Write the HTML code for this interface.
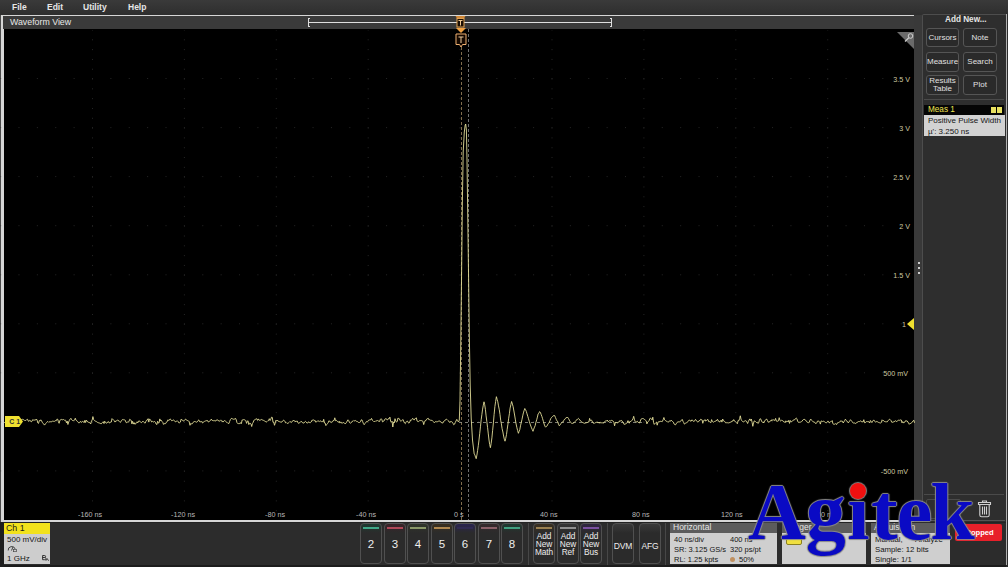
<!DOCTYPE html>
<html><head><meta charset="utf-8">
<style>
*{margin:0;padding:0;box-sizing:border-box}
html,body{width:1008px;height:567px;overflow:hidden;background:#2c2c2c;font-family:"Liberation Sans",sans-serif}
.a{position:absolute}
#menu{left:0;top:0;width:1008px;height:15px;background:linear-gradient(#3a3a3a,#2e2e2e)}
.mi{position:absolute;top:2px;font-size:8.5px;font-weight:bold;color:#e6e6e6;line-height:11px}
#wvframe{left:0;top:15px;width:916px;height:507px;background:#d6d6d6;border-left:1px solid #4a4a4a}
#hdr{left:3px;top:16px;width:912px;height:13px;background:#3a3a3a}
#hdrt{left:10px;top:17px;font-size:8.8px;color:#e8e8e8;line-height:11px}
#black{left:4px;top:29px;width:910px;height:491px;background:#000}
#gap{left:914px;top:15px;width:8px;height:507px;background:#393939}
#rpanel{left:922px;top:14px;width:85px;height:508px;background:#2e2e2e;border:1px solid #4d4d4d;border-bottom:none;border-radius:2px 2px 0 0}
#bottom{left:0;top:522px;width:1008px;height:45px;background:#2c2c2c}
.btn{position:absolute;border:1px solid #555;border-radius:3px;background:#2a2a2a;color:#e0e0e0;font-size:8px;text-align:center}
.lbl{position:absolute;font-size:7.2px;color:#cdc8a0;line-height:9px;white-space:nowrap}
.xl{position:absolute;font-size:7.2px;color:#b8b8b8;line-height:9px;white-space:nowrap;top:510px}
.cb{position:absolute;top:523px;width:22px;height:41px;border:1px solid #505050;border-radius:4px;background:linear-gradient(to bottom,var(--g,#3a3a3a) 0px,#2b2b2b 9px,#2b2b2b);color:#eee;text-align:center}
.cb i{position:absolute;left:2px;right:2px;top:3px;height:2px;background:var(--c)}
.cb span{position:absolute;left:0;right:0;top:14px;font-size:11.5px;line-height:13px}
.cb2 span{font-size:8.3px;line-height:8px;top:8px;letter-spacing:-0.1px}
.sep{position:absolute;top:522px;width:1px;height:43px;background:#474747}
.pnl{position:absolute;top:522px;height:42px;background:#cfcfcf}
.ph{position:absolute;left:0;top:0;right:0;height:11px;background:#5c5c5c;color:#e6e6e6;font-size:8.5px;line-height:11px;padding-left:3px}
.pt{position:absolute;font-size:7.5px;color:#151515;line-height:10px;white-space:nowrap}
</style></head><body>
<div id="menu" class="a"></div>
<div class="mi" style="left:12px">File</div>
<div class="mi" style="left:47px">Edit</div>
<div class="mi" style="left:83px">Utility</div>
<div class="mi" style="left:128px">Help</div>
<div id="wvframe" class="a"></div>
<div id="hdr" class="a"></div>
<div id="hdrt" class="a">Waveform View</div>
<!-- overview bar -->
<div class="a" style="left:309px;top:22px;width:303px;height:1px;background:#dedede"></div>
<div class="a" style="left:308px;top:18px;width:2px;height:9px;border:1px solid #dedede;border-right:none"></div>
<div class="a" style="left:610px;top:18px;width:2px;height:9px;border:1px solid #dedede;border-left:none"></div>
<div id="black" class="a"></div>
<div id="gap" class="a"></div>
<div id="rpanel" class="a"></div>
<div id="bottom" class="a"></div>
<!-- right panel -->
<div class="a" style="left:945px;top:15px;font-size:8.2px;font-weight:bold;color:#e6e6e6;line-height:10px">Add New...</div>
<div class="btn" style="left:926px;top:28px;width:33px;height:19px;line-height:17px">Cursors</div>
<div class="btn" style="left:963px;top:28px;width:34px;height:19px;line-height:17px">Note</div>
<div class="btn" style="left:926px;top:52px;width:33px;height:20px;line-height:18px">Measure</div>
<div class="btn" style="left:963px;top:52px;width:34px;height:20px;line-height:18px">Search</div>
<div class="btn" style="left:926px;top:75px;width:33px;height:20px;line-height:8px;padding-top:1px">Results<br>Table</div>
<div class="btn" style="left:963px;top:75px;width:34px;height:20px;line-height:18px">Plot</div>
<div class="a" style="left:924px;top:99px;width:80px;height:1px;background:#4a4a4a"></div>
<div class="a" style="left:924px;top:105px;width:80px;height:10px;background:#050505"></div>
<div class="a" style="left:928px;top:105px;font-size:8.2px;color:#f0e450;line-height:10px">Meas 1</div>
<div class="a" style="left:991px;top:107px;width:5px;height:6px;background:#e8e060"></div><div class="a" style="left:996.5px;top:107px;width:5px;height:6px;background:#e8e060"></div>
<div class="a" style="left:924px;top:115px;width:81px;height:21px;background:#d2d2d2"></div>
<div class="a" style="left:928px;top:116px;font-size:8px;color:#151515;line-height:10px;white-space:nowrap">Positive Pulse Width</div>
<div class="a" style="left:928px;top:127px;font-size:8px;color:#151515;line-height:10px;white-space:nowrap">&#181;': 3.250 ns</div>
<div class="a" style="left:918px;top:262px;width:2px;height:2px;background:#ccc"></div>
<div class="a" style="left:918px;top:267px;width:2px;height:2px;background:#ccc"></div>
<div class="a" style="left:918px;top:272px;width:2px;height:2px;background:#ccc"></div>
<div class="a" style="left:924px;top:494px;width:80px;height:1px;background:#4a4a4a"></div>
<div class="a" style="left:926px;top:499px;width:35px;height:20px;border:1px solid #4a4a4a;border-radius:2px"></div>
<!-- trash -->
<svg class="a" style="left:976px;top:499px" width="17" height="20" viewBox="0 0 17 20"><g fill="none" stroke="#d0d0d0" stroke-width="1.1"><path d="M2.5 3.5h12v2h-12z"/><path d="M6.5 3.5V2h4v1.5"/><path d="M3.8 5.5v10.5q0 1.8 1.8 1.8h5.8q1.8 0 1.8-1.8V5.5"/><path d="M6.5 7.5v8M8.5 7.5v8M10.5 7.5v8"/></g></svg>
<div class="a" style="left:955px;top:524px;width:47px;height:17px;background:#e8202a;border-radius:2px;color:#fff;font-size:7.6px;font-weight:bold;line-height:17px;text-align:center">Stopped</div>
<div class="a" style="left:1006px;top:14px;width:1px;height:551px;background:#b0b0b0"></div>
<div class="a" style="left:922px;top:520px;width:83px;height:1px;background:#555"></div>
<!-- bottom bar -->
<div class="a" style="left:4px;top:523px;width:46px;height:11px;background:#f2e21c"></div>
<div class="a" style="left:6px;top:523px;font-size:8.8px;color:#1a1a1a;line-height:11px">Ch 1</div>
<div class="a" style="left:4px;top:534px;width:46px;height:30px;background:#cdcdcd"></div>
<div class="pt" style="left:7px;top:535px;font-size:8px">500 mV/div</div>
<svg class="a" style="left:7px;top:544px" width="10" height="8" viewBox="0 0 10 8"><path d="M1.2 6.5 A3.6 3.6 0 0 1 8.2 5" fill="none" stroke="#333" stroke-width="0.9"/><path d="M4.5 6.5 L6 3" stroke="#333" stroke-width="0.9"/><rect x="6.5" y="5.5" width="3" height="2.2" fill="none" stroke="#444" stroke-width="0.7"/></svg>
<div class="pt" style="left:7px;top:554px;font-size:8px">1 GHz</div>
<svg class="a" style="left:42px;top:555px" width="7" height="6" viewBox="0 0 7 6"><path d="M0.6 0.5v4.2M0.6 0.5h1.8q1.2 0 1.2 1q0 1-1.2 1h-1.8M2.6 2.5q1.4 0 1.4 1.1q0 1.1-1.4 1.1h-2" fill="none" stroke="#222" stroke-width="0.9"/><path d="M3.8 5.8 L5.2 3.6 L6.6 5.8" fill="none" stroke="#222" stroke-width="0.8"/></svg>

<div class="cb" style="left:360px;--c:#40a888;--g:#1e3a30"><i></i><span>2</span></div>
<div class="cb" style="left:384px;--c:#b04858;--g:#3a2228"><i></i><span>3</span></div>
<div class="cb" style="left:407px;--c:#8a9868;--g:#30352a"><i></i><span>4</span></div>
<div class="cb" style="left:431px;--c:#b08850;--g:#3a3020"><i></i><span>5</span></div>
<div class="cb" style="left:454px;--c:#3a3070;--g:#2a2450"><i style="opacity:.4"></i><span>6</span></div>
<div class="cb" style="left:478px;--c:#8a6068;--g:#352a2c"><i></i><span>7</span></div>
<div class="cb" style="left:501px;--c:#40a080;--g:#1e3a30"><i></i><span>8</span></div>
<div class="sep" style="left:528px"></div>
<div class="cb cb2" style="left:533px;--c:#9a8050;--g:#3a3020"><i></i><span>Add<br>New<br>Math</span></div>
<div class="cb cb2" style="left:557px;--c:#909090;--g:#353535"><i></i><span>Add<br>New<br>Ref</span></div>
<div class="cb cb2" style="left:580px;--c:#7a50a0;--g:#302540"><i></i><span>Add<br>New<br>Bus</span></div>
<div class="sep" style="left:607px"></div>
<div class="cb cb2" style="left:612px"><span style="top:18px;font-size:8.5px;line-height:9px">DVM</span></div>
<div class="cb cb2" style="left:639px"><span style="top:18px;font-size:8.5px;line-height:9px">AFG</span></div>
<div class="sep" style="left:665px"></div>

<div class="pnl" style="left:670px;width:107px"><div class="ph">Horizontal</div></div>
<div class="pt" style="left:674px;top:535px">40 ns/div</div>
<div class="pt" style="left:730px;top:535px">400 ns</div>
<div class="pt" style="left:674px;top:545px">SR: 3.125 GS/s</div>
<div class="pt" style="left:730px;top:545px">320 ps/pt</div>
<div class="pt" style="left:674px;top:555px">RL: 1.25 kpts</div>
<div class="a" style="left:730px;top:557px;width:5px;height:5px;border-radius:50%;background:#c09060"></div>
<div class="pt" style="left:739px;top:555px">50%</div>

<div class="pnl" style="left:782px;width:84px"><div class="ph">Trigger</div></div>
<div class="a" style="left:786px;top:538px;width:16px;height:7px;background:#f0e040;border:1px solid #8a8020;border-radius:2px"></div>

<div class="pnl" style="left:871px;width:79px"><div class="ph">Acquisition</div></div>
<div class="pt" style="left:875px;top:535px;font-size:7.8px">Manual,</div>
<div class="pt" style="left:915px;top:535px;font-size:7.8px">Analyze</div>
<div class="pt" style="left:875px;top:545px;font-size:7.8px">Sample: 12 bits</div>
<div class="pt" style="left:875px;top:555px;font-size:7.8px">Single: 1/1</div>
<div class="a" style="left:0;top:522px;width:1006px;height:1px;background:#232323"></div>
<div class="a" style="left:0;top:565px;width:1006px;height:2px;background:#1c1c1c"></div>
<div class="a" style="left:0;top:522px;width:4px;height:45px;background:#1e1e1e"></div>
<svg class="a" style="left:0;top:0" width="1008" height="567" viewBox="0 0 1008 567">
<line x1="92.5" y1="30" x2="92.5" y2="520" stroke="#262626" stroke-width="1" stroke-dasharray="1 8.81" stroke-dashoffset="0.5"/>
<line x1="184.4" y1="30" x2="184.4" y2="520" stroke="#262626" stroke-width="1" stroke-dasharray="1 8.81" stroke-dashoffset="0.5"/>
<line x1="276.3" y1="30" x2="276.3" y2="520" stroke="#262626" stroke-width="1" stroke-dasharray="1 8.81" stroke-dashoffset="0.5"/>
<line x1="368.2" y1="30" x2="368.2" y2="520" stroke="#262626" stroke-width="1" stroke-dasharray="1 8.81" stroke-dashoffset="0.5"/>
<line x1="460.1" y1="30" x2="460.1" y2="520" stroke="#262626" stroke-width="1" stroke-dasharray="1 8.81" stroke-dashoffset="0.5"/>
<line x1="552.0" y1="30" x2="552.0" y2="520" stroke="#262626" stroke-width="1" stroke-dasharray="1 8.81" stroke-dashoffset="0.5"/>
<line x1="643.9" y1="30" x2="643.9" y2="520" stroke="#262626" stroke-width="1" stroke-dasharray="1 8.81" stroke-dashoffset="0.5"/>
<line x1="735.8" y1="30" x2="735.8" y2="520" stroke="#262626" stroke-width="1" stroke-dasharray="1 8.81" stroke-dashoffset="0.5"/>
<line x1="827.7" y1="30" x2="827.7" y2="520" stroke="#262626" stroke-width="1" stroke-dasharray="1 8.81" stroke-dashoffset="0.5"/>
<line x1="0.6" y1="78.5" x2="914" y2="78.5" stroke="#262626" stroke-width="1" stroke-dasharray="1 17.38" stroke-dashoffset="0.5"/>
<line x1="0.6" y1="127.6" x2="914" y2="127.6" stroke="#262626" stroke-width="1" stroke-dasharray="1 17.38" stroke-dashoffset="0.5"/>
<line x1="0.6" y1="176.6" x2="914" y2="176.6" stroke="#262626" stroke-width="1" stroke-dasharray="1 17.38" stroke-dashoffset="0.5"/>
<line x1="0.6" y1="225.7" x2="914" y2="225.7" stroke="#262626" stroke-width="1" stroke-dasharray="1 17.38" stroke-dashoffset="0.5"/>
<line x1="0.6" y1="274.8" x2="914" y2="274.8" stroke="#262626" stroke-width="1" stroke-dasharray="1 17.38" stroke-dashoffset="0.5"/>
<line x1="0.6" y1="323.8" x2="914" y2="323.8" stroke="#262626" stroke-width="1" stroke-dasharray="1 17.38" stroke-dashoffset="0.5"/>
<line x1="0.6" y1="372.8" x2="914" y2="372.8" stroke="#262626" stroke-width="1" stroke-dasharray="1 17.38" stroke-dashoffset="0.5"/>
<line x1="0.6" y1="421.9" x2="914" y2="421.9" stroke="#262626" stroke-width="1" stroke-dasharray="1 17.38" stroke-dashoffset="0.5"/>
<line x1="0.6" y1="470.9" x2="914" y2="470.9" stroke="#262626" stroke-width="1" stroke-dasharray="1 17.38" stroke-dashoffset="0.5"/>
<line x1="461.5" y1="47" x2="461.5" y2="520" stroke="#a08860" stroke-width="0.8" stroke-dasharray="3 2"/>
<line x1="468.5" y1="29" x2="468.5" y2="520" stroke="#8a8a8a" stroke-width="0.8" stroke-dasharray="3 2"/>
<line x1="459" y1="422.5" x2="645" y2="422.5" stroke="#8a8a80" stroke-width="0.9" stroke-dasharray="3 3"/>
<polyline points="4.0,421.9 4.7,422.6 5.5,421.6 6.2,420.9 6.9,421.0 7.7,422.5 8.4,423.0 9.1,421.7 9.9,420.5 10.6,420.6 11.4,421.8 12.1,421.2 12.8,419.6 13.6,419.6 14.3,419.1 15.0,419.5 15.8,419.9 16.5,420.4 17.2,421.2 18.0,421.1 18.7,421.2 19.4,421.4 20.2,421.3 20.9,419.7 21.6,419.8 22.4,419.3 23.1,419.9 23.8,419.6 24.6,420.5 25.3,420.5 26.1,420.3 26.8,419.5 27.5,419.3 28.3,421.1 29.0,421.4 29.7,420.3 30.5,420.7 31.2,421.9 31.9,421.4 32.7,419.7 33.4,420.1 34.1,419.8 34.9,420.3 35.6,420.0 36.3,419.0 37.1,420.1 37.8,422.9 38.5,423.4 39.3,420.6 40.0,421.0 40.8,419.8 41.5,420.5 42.2,422.4 43.0,423.2 43.7,423.9 44.4,425.1 45.2,424.1 45.9,423.5 46.6,422.5 47.4,421.6 48.1,421.7 48.8,422.4 49.6,421.7 50.3,421.8 51.0,421.5 51.8,421.8 52.5,421.2 53.2,421.3 54.0,421.2 54.7,421.3 55.5,420.6 56.2,420.8 56.9,419.2 57.7,419.2 58.4,421.7 59.1,423.3 59.9,420.3 60.6,419.8 61.3,419.4 62.1,420.0 62.8,419.6 63.5,419.5 64.3,420.3 65.0,419.8 65.7,420.4 66.5,422.9 67.2,421.1 67.9,424.5 68.7,422.0 69.4,420.3 70.2,419.0 70.9,418.3 71.6,419.7 72.4,420.3 73.1,421.0 73.8,420.4 74.6,420.1 75.3,418.2 76.0,420.2 76.8,420.8 77.5,421.4 78.2,422.4 79.0,423.1 79.7,422.5 80.4,421.4 81.2,422.4 81.9,421.9 82.6,421.4 83.4,421.7 84.1,422.7 84.9,420.3 85.6,422.5 86.3,420.1 87.1,421.1 87.8,422.1 88.5,422.3 89.3,422.5 90.0,422.8 90.7,424.0 91.5,421.0 92.2,420.0 92.9,416.6 93.7,419.7 94.4,420.5 95.1,421.2 95.9,421.2 96.6,421.7 97.3,422.3 98.1,422.6 98.8,422.9 99.6,423.1 100.3,423.4 101.0,424.0 101.8,423.3 102.5,422.4 103.2,421.7 104.0,423.6 104.7,421.2 105.4,422.5 106.2,423.1 106.9,423.1 107.6,422.0 108.4,421.5 109.1,422.9 109.8,422.9 110.6,422.0 111.3,422.0 112.0,418.6 112.8,419.4 113.5,420.1 114.3,420.7 115.0,422.1 115.7,421.0 116.5,420.8 117.2,420.2 117.9,420.3 118.7,420.5 119.4,421.7 120.1,422.4 120.9,421.8 121.6,420.4 122.3,419.6 123.1,420.0 123.8,419.5 124.5,419.9 125.3,420.3 126.0,422.5 126.7,422.6 127.5,422.1 128.2,422.1 129.0,421.5 129.7,419.3 130.4,419.8 131.2,420.3 131.9,423.9 132.6,421.3 133.4,424.1 134.1,422.6 134.8,424.2 135.6,424.0 136.3,422.6 137.0,421.8 137.8,422.9 138.5,421.1 139.2,421.0 140.0,421.3 140.7,422.3 141.4,422.6 142.2,422.1 142.9,421.2 143.7,422.1 144.4,422.6 145.1,423.2 145.9,421.4 146.6,420.2 147.3,420.1 148.1,418.7 148.8,422.1 149.5,418.9 150.3,419.7 151.0,420.8 151.7,422.0 152.5,421.4 153.2,422.0 153.9,421.8 154.7,421.5 155.4,422.3 156.1,424.0 156.9,424.6 157.6,421.3 158.4,423.1 159.1,422.8 159.8,418.9 160.6,421.0 161.3,420.3 162.0,421.5 162.8,422.4 163.5,424.4 164.2,423.6 165.0,423.9 165.7,423.5 166.4,422.2 167.2,421.7 167.9,419.8 168.6,420.4 169.4,420.1 170.1,418.9 170.8,419.5 171.6,420.7 172.3,420.6 173.1,419.9 173.8,420.2 174.5,420.7 175.3,421.8 176.0,421.7 176.7,421.1 177.5,420.9 178.2,421.6 178.9,422.9 179.7,422.7 180.4,422.1 181.1,419.2 181.9,419.8 182.6,420.2 183.3,421.1 184.1,420.7 184.8,419.7 185.5,419.1 186.3,420.0 187.0,420.3 187.8,420.7 188.5,420.9 189.2,421.7 190.0,425.3 190.7,423.4 191.4,423.8 192.2,423.8 192.9,422.9 193.6,421.8 194.4,421.5 195.1,421.7 195.8,421.8 196.6,422.2 197.3,421.8 198.0,420.6 198.8,419.9 199.5,421.6 200.2,421.5 201.0,422.1 201.7,421.4 202.5,423.0 203.2,422.5 203.9,421.9 204.7,421.1 205.4,421.0 206.1,420.6 206.9,420.7 207.6,420.6 208.3,422.0 209.1,421.7 209.8,421.1 210.5,420.3 211.3,419.1 212.0,420.4 212.7,420.5 213.5,420.7 214.2,420.8 214.9,420.5 215.7,421.1 216.4,420.0 217.2,419.8 217.9,420.0 218.6,421.0 219.4,421.2 220.1,420.6 220.8,419.9 221.6,421.2 222.3,421.0 223.0,422.1 223.8,421.1 224.5,420.6 225.2,420.7 226.0,421.7 226.7,422.5 227.4,422.7 228.2,423.5 228.9,423.5 229.6,421.5 230.4,419.6 231.1,418.6 231.9,418.4 232.6,418.9 233.3,419.3 234.1,418.9 234.8,419.2 235.5,418.3 236.3,420.0 237.0,422.7 237.7,423.5 238.5,423.6 239.2,423.4 239.9,423.9 240.7,422.6 241.4,423.6 242.1,419.9 242.9,420.0 243.6,419.6 244.3,419.8 245.1,419.9 245.8,420.7 246.6,423.4 247.3,421.3 248.0,420.7 248.8,424.6 249.5,423.2 250.2,423.2 251.0,424.0 251.7,426.5 252.4,423.6 253.2,422.3 253.9,420.3 254.6,419.9 255.4,419.4 256.1,418.8 256.8,418.8 257.6,420.4 258.3,418.9 259.0,420.1 259.8,420.3 260.5,420.0 261.3,419.5 262.0,419.7 262.7,420.1 263.5,420.4 264.2,420.8 264.9,421.0 265.7,421.8 266.4,422.0 267.1,421.5 267.9,420.7 268.6,420.6 269.3,418.7 270.1,420.5 270.8,419.2 271.5,417.2 272.3,417.4 273.0,422.3 273.7,422.0 274.5,425.3 275.2,423.0 276.0,420.2 276.7,421.1 277.4,420.2 278.2,421.3 278.9,421.1 279.6,421.9 280.4,422.0 281.1,422.2 281.8,422.1 282.6,420.9 283.3,420.3 284.0,420.3 284.8,421.1 285.5,422.8 286.2,422.5 287.0,423.4 287.7,423.3 288.4,423.0 289.2,422.3 289.9,421.5 290.7,422.0 291.4,422.5 292.1,421.3 292.9,421.0 293.6,420.2 294.3,421.1 295.1,420.9 295.8,421.9 296.5,421.1 297.3,421.1 298.0,422.9 298.7,423.3 299.5,423.0 300.2,422.1 300.9,421.4 301.7,421.6 302.4,422.6 303.1,423.1 303.9,423.0 304.6,422.0 305.4,421.4 306.1,421.9 306.8,422.9 307.6,423.1 308.3,422.1 309.0,421.8 309.8,422.8 310.5,422.6 311.2,422.0 312.0,420.1 312.7,420.2 313.4,419.9 314.2,420.6 314.9,420.2 315.6,422.1 316.4,421.8 317.1,421.6 317.8,420.7 318.6,421.1 319.3,421.6 320.1,420.7 320.8,421.3 321.5,421.6 322.3,421.4 323.0,422.1 323.7,419.3 324.5,423.0 325.2,423.1 325.9,425.6 326.7,424.5 327.4,423.7 328.1,422.9 328.9,420.8 329.6,421.0 330.3,422.0 331.1,422.7 331.8,422.1 332.5,421.8 333.3,420.4 334.0,420.7 334.8,417.8 335.5,420.7 336.2,420.3 337.0,421.0 337.7,421.6 338.4,422.4 339.2,421.2 339.9,423.1 340.6,422.1 341.4,422.3 342.1,423.4 342.8,422.5 343.6,422.6 344.3,422.9 345.0,423.8 345.8,423.4 346.5,422.4 347.2,421.0 348.0,419.8 348.7,420.6 349.5,422.6 350.2,423.2 350.9,422.9 351.7,422.3 352.4,421.1 353.1,421.2 353.9,420.4 354.6,420.9 355.3,420.5 356.1,421.0 356.8,421.5 357.5,421.6 358.3,422.3 359.0,422.6 359.7,422.4 360.5,421.8 361.2,419.9 361.9,419.8 362.7,421.7 363.4,423.5 364.2,424.7 364.9,423.6 365.6,422.8 366.4,421.6 367.1,421.9 367.8,421.4 368.6,420.2 369.3,420.0 370.0,419.8 370.8,419.8 371.5,418.4 372.2,420.0 373.0,420.8 373.7,421.5 374.4,421.5 375.2,421.5 375.9,420.7 376.6,420.9 377.4,420.5 378.1,420.8 378.9,421.4 379.6,421.5 380.3,419.3 381.1,418.8 381.8,419.3 382.5,421.9 383.3,421.4 384.0,421.0 384.7,419.3 385.5,418.8 386.2,418.6 386.9,419.8 387.7,419.8 388.4,418.6 389.1,418.8 389.9,417.1 390.6,421.0 391.3,422.3 392.1,421.2 392.8,427.0 393.6,421.9 394.3,422.9 395.0,418.7 395.8,421.1 396.5,422.1 397.2,421.6 398.0,418.0 398.7,418.5 399.4,418.8 400.2,420.7 400.9,421.3 401.6,420.7 402.4,420.0 403.1,419.6 403.8,421.7 404.6,423.0 405.3,423.7 406.0,422.1 406.8,421.3 407.5,421.1 408.3,422.7 409.0,423.2 409.7,422.1 410.5,420.0 411.2,420.4 411.9,419.4 412.7,418.3 413.4,419.4 414.1,420.1 414.9,418.7 415.6,418.4 416.3,417.8 417.1,421.0 417.8,421.6 418.5,421.6 419.3,420.8 420.0,420.4 420.7,420.6 421.5,420.6 422.2,420.9 423.0,421.5 423.7,424.6 424.4,422.3 425.2,420.6 425.9,420.6 426.6,419.2 427.4,418.7 428.1,418.1 428.8,419.7 429.6,419.7 430.3,420.1 431.0,420.5 431.8,420.2 432.5,421.0 433.2,421.6 434.0,422.4 434.7,422.5 435.4,421.6 436.2,422.0 436.9,421.4 437.7,421.7 438.4,421.2 439.1,421.4 439.9,420.8 440.6,421.7 441.3,422.7 442.1,422.5 442.8,423.2 443.5,421.5 444.3,421.2 445.0,420.1 445.7,419.7 446.5,419.3 447.2,419.7 447.9,420.4 448.7,421.1 449.4,422.2 450.1,422.5 450.9,421.2 451.6,421.9 452.4,422.3 453.1,423.5 453.8,424.8 454.6,424.1 455.3,422.4 456.0,421.0 456.8,419.4 457.5,420.7 458.5,422.0 459.3,420.0 460.0,401.0 460.8,340.0 461.6,272.0 462.4,200.0 463.2,152.0 464.3,132.0 465.2,125.0 465.7,124.0 466.4,130.0 467.0,160.0 467.8,220.0 468.5,272.0 469.4,340.0 470.2,385.0 471.2,418.0 472.5,440.0 474.2,454.0 474.9,454.9 475.5,457.2 476.2,458.7 476.9,455.1 477.6,450.5 478.3,445.7 479.0,439.9 479.7,433.7 480.5,426.2 481.2,419.7 481.9,414.4 482.6,409.1 483.3,405.2 484.0,401.8 484.7,404.7 485.4,409.3 486.1,415.9 486.8,421.3 487.6,427.7 488.3,433.9 489.0,440.0 489.7,444.6 490.4,447.7 491.1,443.7 491.9,437.9 492.6,430.7 493.4,422.9 494.1,414.6 494.9,406.6 495.6,401.6 496.4,396.7 497.1,399.3 497.8,401.8 498.5,405.9 499.3,409.8 500.0,414.6 500.7,420.4 501.4,423.9 502.1,428.7 502.9,432.0 503.6,436.0 504.3,439.2 505.0,441.2 505.7,438.5 506.5,434.5 507.2,429.3 507.9,424.4 508.7,418.2 509.4,413.7 510.1,408.1 510.9,404.5 511.6,401.5 512.4,404.1 513.1,406.6 513.9,411.0 514.6,415.0 515.4,419.9 516.1,424.0 516.9,427.7 517.6,430.5 518.4,433.3 519.1,431.4 519.8,429.5 520.5,425.8 521.2,422.8 522.0,419.3 522.7,415.9 523.4,412.9 524.1,410.5 524.8,408.5 525.5,409.6 526.3,411.4 527.0,413.8 527.8,416.4 528.5,418.8 529.3,421.4 530.0,423.8 530.8,426.0 531.5,427.9 532.3,429.7 533.0,431.3 533.7,429.2 534.5,427.1 535.2,425.6 535.9,422.3 536.7,419.8 537.4,417.1 538.1,413.9 538.9,413.2 539.6,411.6 540.4,412.4 541.1,414.4 541.9,416.5 542.6,418.7 543.4,421.5 544.1,424.0 544.9,426.1 545.6,427.2 546.4,426.4 547.1,425.9 547.9,424.1 548.6,423.3 549.4,422.1 550.1,420.2 550.9,418.3 551.6,417.4 552.4,416.7 553.1,415.9 553.9,415.5 554.7,415.6 555.4,417.4 556.2,419.3 557.0,420.9 557.8,421.8 558.5,424.3 559.3,425.8 560.1,424.9 560.8,423.5 561.6,422.8 562.4,422.1 563.1,421.9 563.9,420.2 564.7,419.1 565.5,418.7 566.2,417.5 567.0,417.7 567.8,417.4 568.5,418.5 569.3,420.1 570.1,421.6 570.9,422.6 571.6,423.4 572.4,423.4 573.1,423.3 573.9,422.7 574.6,421.9 575.3,421.5 576.1,420.3 576.8,419.9 577.6,419.0 578.3,418.4 579.1,419.1 579.9,420.0 580.6,421.1 581.4,421.5 582.2,422.4 583.0,422.5 583.7,423.0 584.5,423.3 585.2,422.8 585.9,423.2 586.7,422.6 587.4,422.5 588.1,422.0 588.9,422.1 589.6,418.4 590.4,420.7 591.1,420.1 591.8,420.4 592.6,422.3 593.3,423.0 594.0,423.7 594.8,422.9 595.5,422.8 596.2,422.1 597.0,422.5 597.7,422.0 598.4,423.1 599.2,422.1 599.9,423.3 600.6,422.3 601.4,422.8 602.1,422.6 602.8,423.0 603.6,423.1 604.3,422.0 605.1,421.2 605.8,420.9 606.5,421.0 607.3,420.1 608.0,421.5 608.7,421.5 609.5,420.6 610.2,420.8 610.9,421.0 611.7,420.3 612.4,420.6 613.1,421.1 613.9,422.3 614.6,425.8 615.3,422.4 616.1,422.4 616.8,422.7 617.5,422.8 618.3,422.2 619.0,422.2 619.8,420.6 620.5,420.9 621.2,420.5 622.0,420.8 622.7,421.9 623.4,422.9 624.2,424.5 624.9,424.0 625.6,423.9 626.4,423.5 627.1,422.5 627.8,420.7 628.6,421.1 629.3,423.2 630.0,421.3 630.8,421.5 631.5,420.7 632.2,420.3 633.0,418.6 633.7,416.3 634.5,419.9 635.2,421.5 635.9,422.4 636.7,421.7 637.4,421.3 638.1,422.4 638.9,422.6 639.6,423.0 640.3,421.0 641.1,419.1 641.8,418.7 642.5,418.5 643.3,418.6 644.0,419.2 644.7,419.6 645.5,420.3 646.2,420.8 646.9,423.9 647.7,422.0 648.4,421.5 649.2,420.4 649.9,418.4 650.6,418.3 651.4,418.8 652.1,419.9 652.8,417.2 653.6,422.7 654.3,424.4 655.0,423.5 655.8,422.7 656.5,422.1 657.2,425.2 658.0,422.1 658.7,421.8 659.4,422.0 660.2,421.0 660.9,421.6 661.6,421.5 662.4,421.4 663.1,419.8 663.9,417.5 664.6,419.8 665.3,420.4 666.1,421.0 666.8,421.3 667.5,422.0 668.3,422.0 669.0,421.8 669.7,420.7 670.5,421.2 671.2,420.1 671.9,420.9 672.7,421.7 673.4,422.2 674.1,424.0 674.9,424.7 675.6,424.8 676.3,423.4 677.1,422.8 677.8,421.7 678.6,421.9 679.3,421.9 680.0,421.7 680.8,421.0 681.5,420.2 682.2,419.4 683.0,421.3 683.7,422.6 684.4,424.1 685.2,423.5 685.9,422.9 686.6,422.7 687.4,422.3 688.1,421.2 688.8,420.3 689.6,420.0 690.3,420.9 691.0,421.4 691.8,419.9 692.5,420.2 693.3,421.3 694.0,421.4 694.7,420.9 695.5,419.4 696.2,420.2 696.9,421.4 697.7,421.9 698.4,421.7 699.1,420.6 699.9,420.6 700.6,419.3 701.3,419.6 702.1,419.9 702.8,423.3 703.5,420.7 704.3,420.6 705.0,419.6 705.7,421.1 706.5,420.5 707.2,419.7 708.0,419.5 708.7,421.7 709.4,421.6 710.2,422.3 710.9,422.7 711.6,419.6 712.4,421.5 713.1,422.0 713.8,422.2 714.6,421.4 715.3,421.2 716.0,421.1 716.8,420.0 717.5,419.3 718.2,421.0 719.0,421.1 719.7,422.2 720.4,421.0 721.2,420.1 721.9,422.1 722.7,419.0 723.4,420.8 724.1,420.9 724.9,421.8 725.6,422.8 726.3,422.7 727.1,423.0 727.8,422.6 728.5,422.9 729.3,422.6 730.0,422.8 730.7,421.8 731.5,421.9 732.2,420.8 732.9,421.2 733.7,419.6 734.4,420.9 735.1,421.3 735.9,422.2 736.6,422.8 737.4,423.7 738.1,420.5 738.8,420.8 739.6,418.7 740.3,415.8 741.0,419.2 741.8,420.7 742.5,421.4 743.2,422.1 744.0,421.4 744.7,421.1 745.4,420.7 746.2,420.9 746.9,421.9 747.6,423.5 748.4,421.5 749.1,420.0 749.8,418.9 750.6,420.6 751.3,419.0 752.1,422.4 752.8,426.3 753.5,422.9 754.3,420.9 755.0,421.1 755.7,421.8 756.5,422.5 757.2,422.2 757.9,423.5 758.7,422.8 759.4,420.2 760.1,418.7 760.9,419.2 761.6,421.4 762.3,422.3 763.1,421.9 763.8,423.0 764.5,420.9 765.3,420.5 766.0,419.3 766.8,419.2 767.5,420.6 768.2,422.2 769.0,422.0 769.7,421.8 770.4,420.7 771.2,421.0 771.9,419.5 772.6,420.2 773.4,419.8 774.1,420.4 774.8,420.4 775.6,418.4 776.3,421.1 777.0,421.0 777.8,421.3 778.5,420.8 779.2,417.7 780.0,420.5 780.7,421.0 781.5,420.3 782.2,420.6 782.9,420.7 783.7,421.8 784.4,421.8 785.1,422.7 785.9,420.8 786.6,421.8 787.3,421.2 788.1,422.0 788.8,420.3 789.5,423.4 790.3,420.5 791.0,421.8 791.7,421.6 792.5,421.1 793.2,420.2 793.9,419.8 794.7,419.8 795.4,418.7 796.2,418.0 796.9,418.7 797.6,421.1 798.4,422.3 799.1,422.5 799.8,422.1 800.6,422.1 801.3,421.9 802.0,421.2 802.8,420.0 803.5,419.5 804.2,419.2 805.0,420.0 805.7,420.2 806.4,421.2 807.2,422.3 807.9,422.4 808.6,422.8 809.4,422.0 810.1,419.8 810.9,419.2 811.6,420.3 812.3,420.8 813.1,421.8 813.8,422.0 814.5,422.1 815.3,423.2 816.0,423.7 816.7,422.9 817.5,421.1 818.2,421.0 818.9,421.2 819.7,422.3 820.4,424.1 821.1,421.0 821.9,421.1 822.6,421.5 823.3,421.2 824.1,421.5 824.8,421.9 825.6,422.7 826.3,422.8 827.0,422.2 827.8,421.2 828.5,421.4 829.2,422.9 830.0,422.4 830.7,421.5 831.4,421.4 832.2,420.6 832.9,423.7 833.6,424.2 834.4,424.3 835.1,423.7 835.8,423.8 836.6,424.6 837.3,422.9 838.0,422.9 838.8,422.4 839.5,422.0 840.3,421.7 841.0,420.6 841.7,421.5 842.5,421.3 843.2,423.0 843.9,421.9 844.7,420.4 845.4,419.2 846.1,420.2 846.9,421.4 847.6,421.7 848.3,422.9 849.1,421.8 849.8,420.8 850.5,419.7 851.3,420.6 852.0,421.5 852.7,422.6 853.5,423.0 854.2,422.9 855.0,423.2 855.7,423.5 856.4,423.1 857.2,422.1 857.9,422.0 858.6,421.5 859.4,421.6 860.1,421.2 860.8,420.8 861.6,421.8 862.3,421.7 863.0,422.1 863.8,419.7 864.5,422.7 865.2,422.7 866.0,422.0 866.7,421.5 867.4,421.6 868.2,421.7 868.9,421.7 869.7,423.0 870.4,420.5 871.1,421.3 871.9,422.6 872.6,421.2 873.3,420.3 874.1,420.2 874.8,421.3 875.5,422.2 876.3,421.5 877.0,421.8 877.7,421.8 878.5,422.4 879.2,422.6 879.9,422.9 880.7,423.1 881.4,422.3 882.1,419.8 882.9,420.7 883.6,420.5 884.4,421.5 885.1,421.7 885.8,421.8 886.6,421.8 887.3,421.8 888.0,420.8 888.8,419.9 889.5,419.2 890.2,419.6 891.0,420.5 891.7,422.2 892.4,422.2 893.2,422.4 893.9,421.3 894.6,421.6 895.4,420.6 896.1,421.5 896.8,421.4 897.6,420.8 898.3,420.2 899.1,420.6 899.8,420.1 900.5,419.9 901.3,420.0 902.0,422.8 902.7,421.6 903.5,423.1 904.2,422.1 904.9,422.1 905.7,420.6 906.4,420.9 907.1,420.9 907.9,422.0 908.6,423.1 909.3,424.3 910.1,423.3 910.8,423.6 911.5,422.6 912.3,422.2 913.0,420.9 913.8,420.2 914.5,422.8" fill="none" stroke="#e2dc98" stroke-width="0.9" stroke-linejoin="round"/>
<path d="M897 32 H914 V49 Z" fill="#6a6a6a"/>
<circle cx="910.5" cy="36" r="2.3" fill="none" stroke="#d0d0d0" stroke-width="1"/>
<path d="M908.8 37.8 L905 41.5" stroke="#d0d0d0" stroke-width="1.2"/>
<path d="M455.5 16 h10 l-1.5 2.5 h-7 Z" fill="#d08838"/>
<rect x="457" y="18.5" width="7" height="8.5" fill="#1a0e04" stroke="#e0a050" stroke-width="1"/>
<path d="M458.5 20.5 h4 M460.5 20.5 v5" stroke="#f0c890" stroke-width="1"/>
<path d="M456 28 h10 l-5 5 Z" fill="#f0a040"/>
<path d="M456 34 h10 v10.5 h-3.5 l-1.5 2.5 l-1.5 -2.5 h-3.5 Z" fill="#140800" stroke="#f0b070" stroke-width="1"/>
<path d="M458.5 37 h5 M461 37 v6" stroke="#f5d0a0" stroke-width="1"/>
<path d="M5 416 h14 l4 5.5 l-4 5.5 h-14 Z" fill="#f0e030"/>
<text x="9.3" y="424.3" font-family="Liberation Sans" font-size="7" font-weight="bold" fill="#333">C 1</text>
<path d="M914 318 v12 l-7 -6 Z" fill="#f0e030"/>
</svg>
<div class="lbl" style="right:98px;top:74.5px">3.5 V</div>
<div class="lbl" style="right:98px;top:123.5px">3 V</div>
<div class="lbl" style="right:98px;top:172.5px">2.5 V</div>
<div class="lbl" style="right:98px;top:221.5px">2 V</div>
<div class="lbl" style="right:98px;top:270.5px">1.5 V</div>
<div class="lbl" style="right:102px;top:319.5px">1</div>
<div class="lbl" style="right:100px;top:368.5px">500 mV</div>
<div class="lbl" style="right:100px;top:466.5px">-500 mV</div>
<div class="xl" style="left:78px">-160 ns</div>
<div class="xl" style="left:171px">-120 ns</div>
<div class="xl" style="left:265px">-80 ns</div>
<div class="xl" style="left:356px">-40 ns</div>
<div class="xl" style="left:454px">0 s</div>
<div class="xl" style="left:540px">40 ns</div>
<div class="xl" style="left:632px">80 ns</div>
<div class="xl" style="left:721px">120 ns</div>
<div class="xl" style="left:813px">160 ns</div>
<!-- Agitek logo -->
<div class="a" style="left:748px;top:467px;font-family:'Liberation Serif',serif;font-weight:bold;font-size:80px;line-height:90px;color:#0a0ac4;white-space:nowrap;text-shadow:1px 0 1px #8a8a8a,-1px 0 1px #8a8a8a,0 1px 1px #8a8a8a,0 -1px 1px #8a8a8a">Ag<span style="margin-left:1.5px">&#305;</span><span style="margin-left:1.5px">t</span><span style="margin-left:-1px">e</span><span style="margin-left:-2px">k</span></div>
<div class="a" style="left:850px;top:483px;width:16px;height:16px;border-radius:50%;background:#f01010;box-shadow:0 0 1px 1px #8a8a8a"></div>
</body></html>
